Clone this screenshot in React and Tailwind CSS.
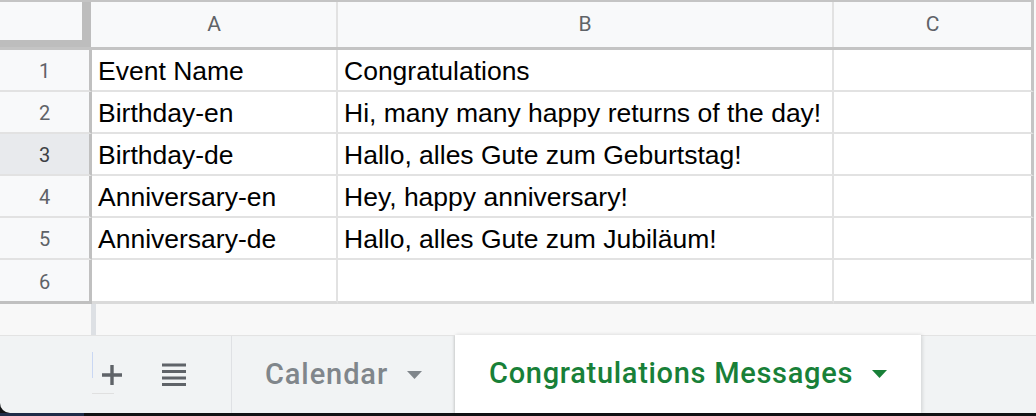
const rows = [
  ["Event Name", "Congratulations"],
  ["Birthday-en", "Hi, many many happy returns of the day!"],
  ["Birthday-de", "Hallo, alles Gute zum Geburtstag!"],
  ["Anniversary-en", "Hey, happy anniversary!"],
  ["Anniversary-de", "Hallo, alles Gute zum Jubiläum!"],
  ["", ""],
];

function Caret({ className }) {
  return (
    <svg width="15" height="8" viewBox="0 0 15 8" className={className}>
      <path d="M0 0 L15 0 L7.5 8 Z" fill="currentColor" />
    </svg>
  );
}

export default function App() {
  return (
    <div className="w-[1036px] h-[416px] overflow-hidden bg-[#f8f8f8] flex flex-col font-['Liberation_Sans',Arial,sans-serif]">
      {/* sheet grid */}
      <div className="w-[1034px] shrink-0 flex flex-col">
        {/* column header */}
        <div className="flex h-[50px] shrink-0 border-t-2 border-b-[3px] border-[#c4c4c4] bg-[#f8f9fa] font-['Roboto',sans-serif] text-[21px] text-[#5f6368]">
          <div className="w-[92px] shrink-0 flex">
            <div className="w-[82px] flex flex-col">
              <div className="flex-1" />
              <div className="h-[7px] bg-[#bdbdbd]" />
            </div>
            <div className="w-[9px] bg-[#bdbdbd]" />
            <div className="w-[1px]" />
          </div>
          <div className="w-[246px] shrink-0 flex items-center justify-center border-r-2 border-[#e2e2e2]">A</div>
          <div className="w-[496px] shrink-0 flex items-center justify-center border-r-2 border-[#e2e2e2]">B</div>
          <div className="w-[200px] shrink-0 flex items-center justify-center border-r-[3px] border-[#c4c4c4]">C</div>
        </div>

        {rows.map((r, i) => {
          const last = i === rows.length - 1;
          const active = i === 2;
          return (
            <div key={i} className={`flex shrink-0 bg-white ${last ? "h-[44px]" : "h-[42px]"}`}>
              <div
                className={`w-[92px] shrink-0 flex items-center justify-center pt-[2px] border-r-[3px] border-r-[#c0c0c0] font-['Roboto',sans-serif] text-[20px] ${
                  active ? "bg-[#e8eaed] text-[#3c4043]" : "bg-[#f8f9fa] text-[#5f6368]"
                } ${last ? "border-b-[3px] border-b-[#c0c0c0]" : "border-b-2 border-b-[#e2e2e2]"}`}
              >
                {i + 1}
              </div>
              <div
                className={`w-[246px] shrink-0 flex items-center pl-[6px] pt-[3px] text-[26.5px] text-black border-r-2 border-r-[#e2e2e2] ${
                  last ? "border-b-[3px] border-b-[#dadada]" : "border-b-2 border-b-[#e2e2e2]"
                }`}
              >
                {r[0]}
              </div>
              <div
                className={`w-[496px] shrink-0 flex items-center pl-[6px] pt-[3px] text-[26.5px] text-black border-r-2 border-r-[#e2e2e2] ${
                  last ? "border-b-[3px] border-b-[#dadada]" : "border-b-2 border-b-[#e2e2e2]"
                }`}
              >
                {r[1]}
              </div>
              <div
                className={`w-[200px] shrink-0 border-r-[3px] border-r-[#c4c4c4] ${
                  last ? "border-b-[3px] border-b-[#dadada]" : "border-b-2 border-b-[#e2e2e2]"
                }`}
              />
            </div>
          );
        })}
      </div>

      {/* horizontal scroll strip */}
      <div className="h-[31px] shrink-0 flex bg-[#f8f8f8]">
        <div className="w-[91px]" />
        <div className="w-[5px] bg-[#dde0e4]" />
      </div>

      {/* sheet tabs */}
      <div className="h-[81px] shrink-0 flex flex-col bg-[#111214]">
        <div className="h-[78px] shrink-0 flex bg-[#f1f3f4] border-t border-[#e3e3e3] rounded-bl-[10px] relative">
          <div className="w-[232px] shrink-0 flex items-center border-r border-[#dfe1e4] relative">
            <div className="absolute left-[92px] top-[16px] w-[1px] h-[26px] bg-[#c9d7f3]" />
            <div className="absolute left-[92px] top-[57px] w-[22px] h-[1px] bg-[#e0e0e0]" />
            <svg width="22" height="22" viewBox="0 0 22 22" className="ml-[101px] text-[#5f6368]">
              <path d="M11 1 V21 M1 11 H21" stroke="currentColor" strokeWidth="3.4" />
            </svg>
            <svg width="24" height="23" viewBox="0 0 24 23" className="ml-[39px] text-[#5f6368]">
              <path d="M0 2 H24 M0 8.5 H24 M0 15 H24 M0 21.5 H24" stroke="currentColor" strokeWidth="3" />
            </svg>
          </div>
          <div className="w-[223px] shrink-0 flex items-center pl-[33px] font-['Roboto',sans-serif] font-medium text-[29px] tracking-[0.9px] text-[#80868b] shadow-[inset_-3px_0_3px_-2px_rgba(0,0,0,0.12)]">
            <span>Calendar</span>
            <Caret className="ml-[19px] text-[#80868b]" />
          </div>
          <div className="w-[466px] shrink-0 -mt-px flex items-center pl-[34px] bg-white font-['Roboto',sans-serif] font-medium text-[29px] tracking-[0.7px] text-[#188038] shadow-[1px_0_4px_rgba(0,0,0,0.15)]">
            <span>Congratulations Messages</span>
            <Caret className="ml-[19px] text-[#188038]" />
          </div>
        </div>
        <div className="flex-1 flex">
          <div className="w-[84px] bg-[#1f2c48]" />
        </div>
      </div>
    </div>
  );
}
